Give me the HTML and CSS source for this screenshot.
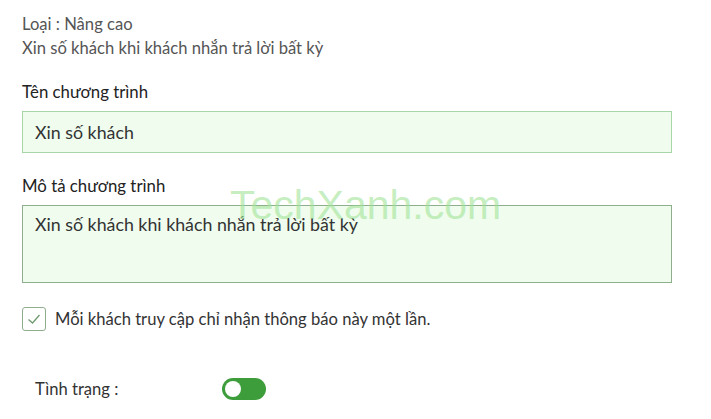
FILE: index.html
```html
<!DOCTYPE html>
<html lang="vi">

<head>
    <meta charset="UTF-8">
    <meta name="viewport" content="width=device-width, initial-scale=1.0">
    <title>Xin số khách</title>
    <link rel="stylesheet" href="styles.css">
</head>

<body>
    <div class="page">
        <div class="watermark">TechXanh.com</div>

        <div class="info">
            <div>Loại : Nâng cao</div>
            <div>Xin số khách khi khách nhắn trả lời bất kỳ</div>
        </div>

        <div class="field field-name">
            <label for="programName">Tên chương trình</label>
            <input type="text" id="programName" value="Xin số khách">
        </div>

        <div class="field field-desc">
            <label for="programDesc">Mô tả chương trình</label>
            <textarea id="programDesc">Xin số khách khi khách nhắn trả lời bất kỳ</textarea>
        </div>

        <label class="check">
            <span class="check-box">
                <svg width="16" height="16" viewBox="0 0 16 16">
                    <path d="M2.5 8.5 L6.5 12 L13.5 4" fill="none" stroke="#6f9a6f" stroke-width="1.3" />
                </svg>
            </span>
            Mỗi khách truy cập chỉ nhận thông báo này một lần.
        </label>

        <div class="status">
            <span class="status-label">Tình trạng :</span>
            <span class="switch"><span class="knob"></span></span>
        </div>
    </div>
</body>

</html>
```

FILE: styles.css
```css
body {
    margin: 0;
    font-family: Lato, "Noto Sans", sans-serif;
    color: #333;
    background-color: #fff;
}

.page {
    position: relative;
    width: 650px;
    padding: 12px 0 0 22px;
}

.watermark {
    position: absolute;
    left: 230px;
    top: 182px;
    font-family: "Liberation Sans", Arial, sans-serif;
    font-size: 41px;
    color: rgba(160, 228, 150, 0.6);
    pointer-events: none;
    z-index: 2;
}

.info {
    font-size: 16.6px;
    line-height: 24px;
    color: #555;
}

.field {
    display: flex;
    flex-direction: column;
    gap: 7px;
    margin-top: 20px;
}

.field-desc {
    margin-top: 21px;
}

.field label {
    font-size: 16.8px;
    line-height: 24px;
    color: #222;
}

.field input,
.field textarea {
    box-sizing: border-box;
    width: 650px;
    margin: 0;
    padding: 0 12px;
    font-family: Lato, "Noto Sans", sans-serif;
    font-size: 17.8px;
    color: #333;
    background-color: #effcee;
    border: 1px solid #a8d6a6;
    outline: none;
}

.field input {
    height: 42px;
}

.field textarea {
    height: 78px;
    padding-top: 7px;
    line-height: 22px;
    resize: none;
    border-color: #8fae8e;
}

.check {
    display: flex;
    align-items: center;
    gap: 9px;
    margin-top: 24px;
    font-size: 16.6px;
    line-height: 24px;
    color: #333;
}

.check-box {
    box-sizing: border-box;
    width: 24px;
    height: 24px;
    display: flex;
    align-items: center;
    justify-content: center;
    border: 1px solid #8fae8e;
    border-radius: 3px;
}

.status {
    display: flex;
    align-items: center;
    margin-top: 47px;
    padding-left: 13px;
}

.status-label {
    width: 187px;
    font-size: 16.6px;
    line-height: 22px;
    color: #333;
}

.switch {
    width: 44px;
    height: 22px;
    border-radius: 11px;
    background-color: #3d9d3a;
    display: flex;
    align-items: center;
    padding-left: 3px;
    box-sizing: border-box;
}

.knob {
    width: 16px;
    height: 16px;
    border-radius: 50%;
    background-color: #fff;
}
```
